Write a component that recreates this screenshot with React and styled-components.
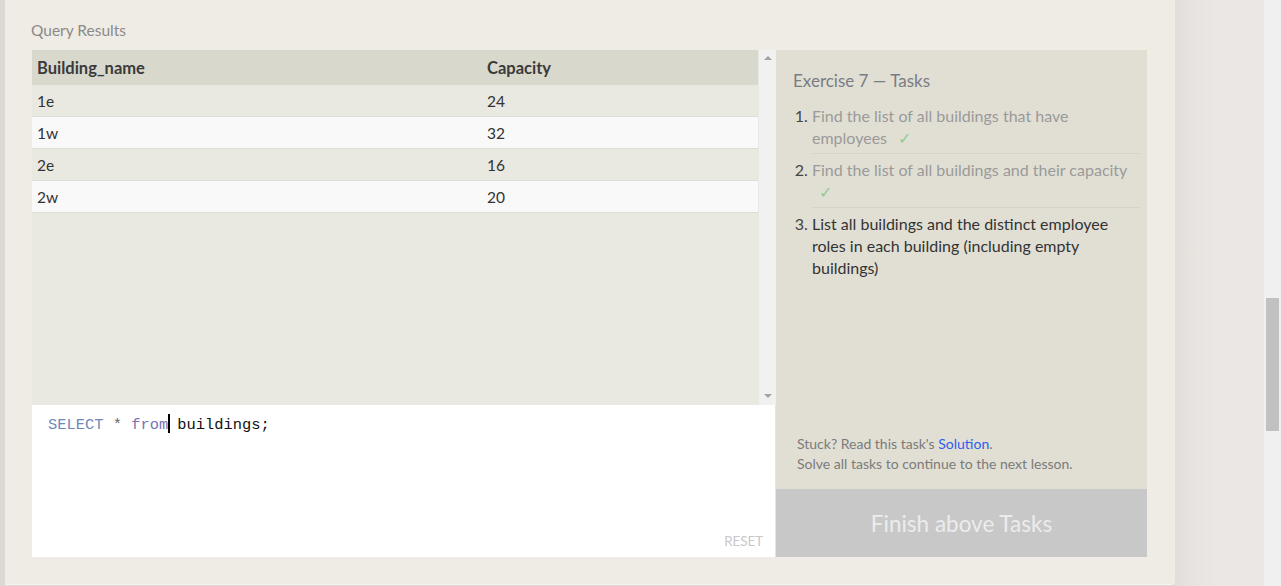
import React from "react";
import styled, { createGlobalStyle } from "styled-components";

const Global = createGlobalStyle`
  html, body { margin: 0; padding: 0; }
  body { font-family: Lato, "Open Sans", sans-serif; background: #e8e4e0; }
`;

const Page = styled.div`
  display: flex;
  height: 586px;
  width: 1281px;
  overflow: hidden;
  background: #dcd8d4;
`;

const Card = styled.div`
  margin-left: 5px;
  width: 1115px;
  height: 557px;
  padding: 0 28px 27px 27px;
  background: #efece5;
  border-bottom-right-radius: 4px;
  display: flex;
  flex-direction: column;
  box-shadow: 0 1px 0 #f6f4f0;
`;

const Title = styled.div`
  height: 50px;
  line-height: 20px;
  padding-top: 20px;
  box-sizing: border-box;
  font-size: 15.5px;
  color: #8a8a8a;
  margin-left: -1px;
`;

const Workspace = styled.div`
  display: grid;
  grid-template-columns: 744px 371px;
  grid-template-rows: 355px 84px 68px;
`;

const ResultsArea = styled.div`
  grid-column: 1;
  grid-row: 1;
  display: flex;
  background: #e9e8e1;
`;

const TableWrap = styled.div`
  flex: 1;
`;

const Table = styled.table`
  width: 726px;
  border-collapse: collapse;
  color: #333;
`;

const Th = styled.th`
  text-align: left;
  font-weight: 700;
  font-size: 16.5px;
  height: 35px;
  padding: 0 5px;
  background: #d9d8cc;
  color: #3a3a3a;
  width: ${(p) => p.$w || "auto"};
  box-sizing: border-box;
`;

const Tr = styled.tr`
  background: ${(p) => (p.$alt ? "#f9f9f9" : "#e9e8e1")};
  border-bottom: 1px solid #dcdcd8;
`;

const Td = styled.td`
  height: 31px;
  padding: 0 5px;
  font-size: 15.5px;
  color: #333;
`;

const VScroll = styled.div`
  width: 17px;
  background: #f1f1f1;
  display: flex;
  flex-direction: column;
  justify-content: space-between;
  align-items: center;
  padding: 6px 0 7px;
  box-sizing: border-box;
`;

const Arrow = styled.div`
  width: 0;
  height: 0;
  border-left: 4px solid transparent;
  border-right: 4px solid transparent;
  ${(p) =>
    p.$up
      ? "border-bottom: 4px solid #a3a3a3;"
      : "border-top: 4px solid #a3a3a3;"}
`;

const Editor = styled.div`
  grid-column: 1;
  grid-row: 2 / span 2;
  background: #fff;
  border-right: 1px solid #e6e3da;
  display: flex;
  flex-direction: column;
  justify-content: space-between;
  padding: 9px 12px 8px 16px;
  box-sizing: border-box;
`;

const Code = styled.div`
  font-family: "Liberation Mono", "DejaVu Sans Mono", monospace;
  font-size: 15.4px;
  line-height: 20px;
  color: #111;
`;

const Kw = styled.span`
  color: ${(p) => p.$c};
`;

const Caret = styled.span`
  display: inline-block;
  width: 2px;
  height: 19px;
  background: #000;
  vertical-align: -4px;
  margin-right: -2px;
`;

const Reset = styled.div`
  align-self: flex-end;
  font-size: 13.3px;
  color: #c8c8c8;
`;

const Panel = styled.div`
  grid-column: 2;
  grid-row: 1 / span 2;
  background: #e1dfd4;
  display: flex;
  flex-direction: column;
  padding: 20px 7px 15px 17px;
  box-sizing: border-box;
`;

const PanelTitle = styled.div`
  font-size: 17px;
  line-height: 22px;
  color: #7a7c84;
  margin-bottom: 13px;
`;

const List = styled.ol`
  margin: 0;
  padding: 0 0 0 19px;
  flex: 1;
`;

const Item = styled.li`
  font-size: 16px;
  line-height: 22px;
  padding: 0 0 4px;
  margin-bottom: 5px;
  color: ${(p) => (p.$done ? "#9a9a9a" : "#333")};
  border-bottom: ${(p) => (p.$last ? "none" : "1px solid #d6d4c9")};
  &::marker {
    color: #444;
  }
`;

const Check = styled.span`
  color: #8fcc94;
  margin-left: 7px;
`;

const Help = styled.div`
  font-size: 14px;
  line-height: 20px;
  color: #7b7b7b;
  padding-left: 4px;
`;

const Link = styled.a`
  color: #2c5ef0;
  text-decoration: none;
`;

const FinishButton = styled.div`
  grid-column: 2;
  grid-row: 3;
  background: #c8c8c8;
  color: #ececec;
  font-size: 22.5px;
  display: flex;
  align-items: center;
  justify-content: center;
`;

const Gutter = styled.div`
  flex: 1;
  background: linear-gradient(to right, #e1dedb 0px, #e6e2de 12px, #ebe7e4 40px, #ebe7e4 100%);
`;

const PageScroll = styled.div`
  width: 17px;
  background: #f0f0f0;
  display: flex;
  flex-direction: column;
  align-items: center;
  padding-top: 298px;
  box-sizing: border-box;
`;

const Thumb = styled.div`
  width: 13px;
  height: 133px;
  background: #c1c1c1;
`;

const rows = [
  ["1e", "24"],
  ["1w", "32"],
  ["2e", "16"],
  ["2w", "20"],
];

export default function App() {
  return (
    <>
      <Global />
      <Page>
        <Card>
          <Title>Query Results</Title>
          <Workspace>
            <ResultsArea>
              <TableWrap>
                <Table>
                  <thead>
                    <tr>
                      <Th $w="450px">Building_name</Th>
                      <Th>Capacity</Th>
                    </tr>
                  </thead>
                  <tbody>
                    {rows.map((r, i) => (
                      <Tr key={r[0]} $alt={i % 2 === 1}>
                        <Td>{r[0]}</Td>
                        <Td>{r[1]}</Td>
                      </Tr>
                    ))}
                  </tbody>
                </Table>
              </TableWrap>
              <VScroll>
                <Arrow $up />
                <Arrow />
              </VScroll>
            </ResultsArea>
            <Editor>
              <Code>
                <Kw $c="#7088b8">SELECT</Kw> <Kw $c="#666">*</Kw>{" "}
                <Kw $c="#7a72b6">from</Kw>
                <Caret /> buildings;
              </Code>
              <Reset>RESET</Reset>
            </Editor>
            <Panel>
              <PanelTitle>Exercise 7 — Tasks</PanelTitle>
              <List>
                <Item $done>
                  Find the list of all buildings that have employees{" "}
                  <Check>✓</Check>
                </Item>
                <Item $done>
                  Find the list of all buildings and their capacity{" "}
                  <Check>✓</Check>
                </Item>
                <Item $last>
                  List all buildings and the distinct employee roles in each
                  building (including empty buildings)
                </Item>
              </List>
              <Help>
                Stuck? Read this task's <Link href="#">Solution</Link>.
                <br />
                Solve all tasks to continue to the next lesson.
              </Help>
            </Panel>
            <FinishButton>Finish above Tasks</FinishButton>
          </Workspace>
        </Card>
        <Gutter />
        <PageScroll>
          <Thumb />
        </PageScroll>
      </Page>
    </>
  );
}
